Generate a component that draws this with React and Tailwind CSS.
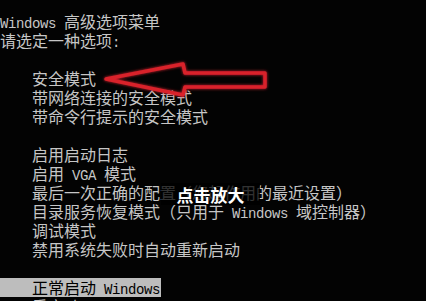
import React from 'react';

// splits a line into ascii runs (narrow mono) and CJK runs (full width)
function Mixed({ text }) {
  const parts = text.match(/[\x00-\x7f]+|[^\x00-\x7f]+/g) || [];
  return parts.map((p, i) =>
    /^[\x00-\x7f]+$/.test(p) ? (
      <span key={i} className="font-['Liberation_Mono',monospace] text-[14px] tracking-[-0.4px]">{p}</span>
    ) : (
      <span key={i}>{p}</span>
    )
  );
}

const lines = [
  { t: 'Windows 高级选项菜单' },
  { t: '请选定一种选项:' },
  { t: '' },
  { t: '    安全模式' },
  { t: '    带网络连接的安全模式' },
  { t: '    带命令行提示的安全模式' },
  { t: '' },
  { t: '    启用启动日志' },
  { t: '    启用 VGA 模式' },
  { t: '    最后一次正确的配置（您起作用的最近设置）' },
  { t: '    目录服务恢复模式（只用于 Windows 域控制器）' },
  { t: '    调试模式' },
  { t: '    禁用系统失败时自动重新启动' },
  { t: '' },
  { t: '    正常启动 Windows', sel: true },
  { t: '    重启动' },
];

export default function App() {
  return (
    <div className="relative w-[426px] h-[301px] overflow-hidden bg-[#030303] pt-3 text-[16px] leading-[19px] text-[#c6c6c6] font-['Noto_Sans_CJK_SC',sans-serif]">
      {lines.map((l, i) => (
        <div key={i} className="h-[19px] whitespace-pre">
          {l.sel ? (
            <span className="inline-block h-[19px] bg-[#bdbdbd] text-black pr-[1px]">
              <Mixed text={l.t} />
            </span>
          ) : (
            <Mixed text={l.t} />
          )}
        </div>
      ))}

      {/* red arrow drawn over the menu */}
      <svg className="absolute left-0 top-0" width="426" height="301" viewBox="0 0 426 301">
        <defs>
          <filter id="glow" x="-20%" y="-40%" width="140%" height="180%">
            <feGaussianBlur stdDeviation="1.6" result="b" />
            <feMerge>
              <feMergeNode in="b" />
              <feMergeNode in="SourceGraphic" />
            </feMerge>
          </filter>
        </defs>
        <path
          d="M106 79 L183 64 L185 73 L265 73 L265 87 L185 87 L183 95 Z"
          fill="none"
          stroke="#d9212c"
          strokeWidth="3.5"
          strokeLinejoin="round"
          filter="url(#glow)"
        />
      </svg>

      {/* zoom hint */}
      <div className="absolute left-[161px] top-[183px] w-[99px] h-[22px] bg-black/75 flex items-center justify-center">
        <span className="text-white font-bold text-[17px] leading-none tracking-[0px]">点击放大</span>
      </div>
    </div>
  );
}
